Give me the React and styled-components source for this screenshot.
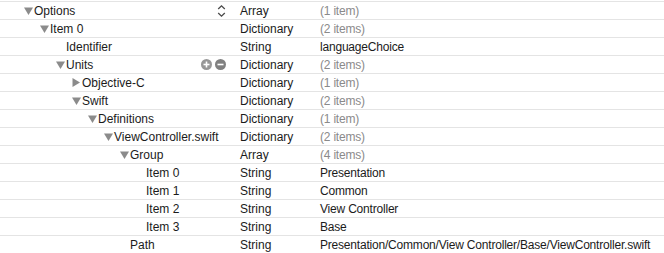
import React from 'react';
import styled, { createGlobalStyle } from 'styled-components';

const rows = [
  { key: 'Options', level: 0, open: true, type: 'Array', value: '(1 item)', muted: true, control: 'stepper' },
  { key: 'Item 0', level: 1, open: true, type: 'Dictionary', value: '(2 items)', muted: true },
  { key: 'Identifier', level: 2, type: 'String', value: 'languageChoice' },
  { key: 'Units', level: 2, open: true, type: 'Dictionary', value: '(2 items)', muted: true, control: 'plusminus' },
  { key: 'Objective-C', level: 3, open: false, type: 'Dictionary', value: '(1 item)', muted: true },
  { key: 'Swift', level: 3, open: true, type: 'Dictionary', value: '(2 items)', muted: true },
  { key: 'Definitions', level: 4, open: true, type: 'Dictionary', value: '(1 item)', muted: true },
  { key: 'ViewController.swift', level: 5, open: true, type: 'Dictionary', value: '(2 items)', muted: true },
  { key: 'Group', level: 6, open: true, type: 'Array', value: '(4 items)', muted: true },
  { key: 'Item 0', level: 7, type: 'String', value: 'Presentation' },
  { key: 'Item 1', level: 7, type: 'String', value: 'Common' },
  { key: 'Item 2', level: 7, type: 'String', value: 'View Controller' },
  { key: 'Item 3', level: 7, type: 'String', value: 'Base' },
  { key: 'Path', level: 6, type: 'String', value: 'Presentation/Common/View Controller/Base/ViewController.swift' },
];

export default function App() {
  return (
    <>
      <GlobalStyle />
      <Outline>
        {rows.map((row, i) => (
          <Row key={i}>
            <KeyCell level={row.level}>
              <Disclosure>
                {row.open === true && (
                  <svg width="9" height="8" viewBox="0 0 9 8">
                    <polygon points="0,0.5 9,0.5 4.5,8" fill="#8b8b8b" />
                  </svg>
                )}
                {row.open === false && (
                  <svg width="8" height="9" viewBox="0 0 8 9">
                    <polygon points="0.5,0 8,4.5 0.5,9" fill="#8b8b8b" />
                  </svg>
                )}
              </Disclosure>
              <KeyText>{row.key}</KeyText>
              {row.control === 'stepper' && (
                <Controls>
                  <svg width="9" height="14" viewBox="0 0 9 14">
                    <polyline points="1.2,5 4.5,1.8 7.8,5" fill="none" stroke="#4a4a4a" strokeWidth="1.3" />
                    <polyline points="1.2,9 4.5,12.2 7.8,9" fill="none" stroke="#4a4a4a" strokeWidth="1.3" />
                  </svg>
                </Controls>
              )}
              {row.control === 'plusminus' && (
                <Controls>
                  <RoundButton tone="#979797">
                    <svg width="11" height="11" viewBox="0 0 11 11">
                      <rect x="2.5" y="4.7" width="6" height="1.6" fill="#fff" />
                      <rect x="4.7" y="2.5" width="1.6" height="6" fill="#fff" />
                    </svg>
                  </RoundButton>
                  <RoundButton tone="#808080">
                    <svg width="11" height="11" viewBox="0 0 11 11">
                      <rect x="2.5" y="4.7" width="6" height="1.6" fill="#fff" />
                    </svg>
                  </RoundButton>
                </Controls>
              )}
            </KeyCell>
            <TypeCell>{row.type}</TypeCell>
            <ValueCell muted={row.muted}>{row.value}</ValueCell>
          </Row>
        ))}
      </Outline>
    </>
  );
}

const GlobalStyle = createGlobalStyle`
  html, body {
    margin: 0;
    padding: 0;
    background: #ffffff;
  }
  body {
    font-family: "Liberation Sans", Arial, sans-serif;
    font-size: 12px;
    color: #1b1b1b;
  }
`;

const Outline = styled.div`
  display: flex;
  flex-direction: column;
  width: 664px;
  height: 253px;
  padding-top: 1px;
  box-sizing: border-box;
  overflow: hidden;
`;

const Row = styled.div`
  display: grid;
  grid-template-columns: 240px 80px 1fr;
  align-items: center;
  height: 18px;
  flex: none;
  box-sizing: border-box;
  border-top: 1px solid #e4e4e4;
`;

const KeyCell = styled.div`
  display: flex;
  align-items: center;
  height: 100%;
  padding-left: ${(p) => 24 + p.level * 16}px;
  padding-right: 14px;
  box-sizing: border-box;
`;

const Disclosure = styled.span`
  display: flex;
  align-items: center;
  width: 10px;
  height: 100%;
  flex: none;
`;

const KeyText = styled.span`
  flex: 1;
  white-space: nowrap;
`;

const Controls = styled.span`
  display: flex;
  align-items: center;
  gap: 3px;
`;

const RoundButton = styled.span`
  display: flex;
  width: 11px;
  height: 11px;
  border-radius: 50%;
  background: ${(p) => p.tone};
`;

const TypeCell = styled.div`
  white-space: nowrap;
`;

const ValueCell = styled.div`
  white-space: nowrap;
  letter-spacing: -0.2px;
  color: ${(p) => (p.muted ? '#8a8a8a' : '#1b1b1b')};
`;
